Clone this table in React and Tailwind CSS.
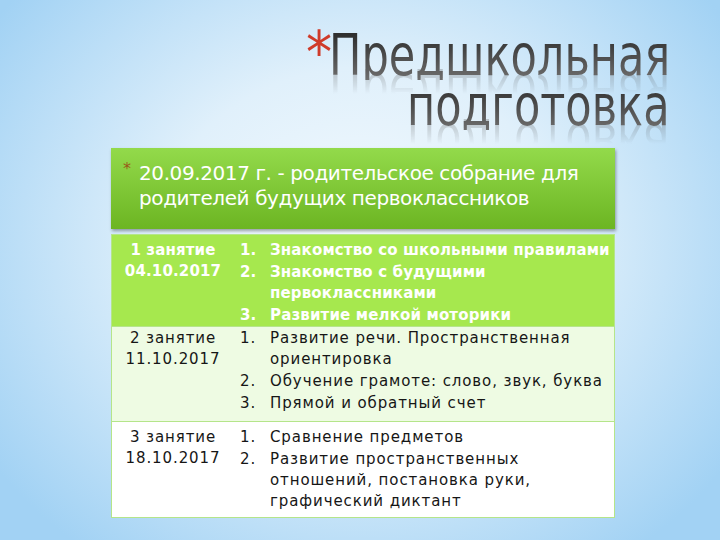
import React from 'react';

const rows = [
  {
    title: '1 занятие',
    date: '04.10.2017',
    items: [['Знакомство со школьными правилами'], ['Знакомство с будущими', 'первоклассниками'], ['Развитие мелкой моторики']],
    tone: 'bg-[#a6e84e] text-white font-bold tracking-[0.15px]',
    box: 'h-[91px] pt-[5px]',
  },
  {
    title: '2 занятие',
    date: '11.10.2017',
    items: [['Развитие речи. Пространственная', 'ориентировка'], ['Обучение грамоте: слово, звук, буква'], ['Прямой и обратный счет']],
    tone: 'bg-[#eefbe3] text-[#161616] tracking-[0.9px] border-t border-[#b5e58a]',
    box: 'h-[95px] pt-[1px]',
  },
  {
    title: '3 занятие',
    date: '18.10.2017',
    items: [['Сравнение предметов'], ['Развитие пространственных', 'отношений, постановка руки,', 'графический диктант']],
    tone: 'bg-white text-[#161616] tracking-[0.9px] border-t border-[#b5e58a]',
    box: 'h-[96px] pt-[5px]',
  },
];

const titleLine =
  "block shrink-0 whitespace-nowrap origin-right scale-x-[0.84] bg-[linear-gradient(#2f2f2f_10%,#6e6e6e)] bg-clip-text text-transparent [-webkit-box-reflect:below_-11px_linear-gradient(transparent_50%,rgba(0,0,0,0.35))]";

export default function App() {
  return (
    <div className="w-[720px] h-[540px] overflow-hidden bg-[radial-gradient(ellipse_62%_72%_at_50%_45%,#f4fafe_0%,#e0f0fb_45%,#a2d2f4_100%)] font-['DejaVu_Sans',sans-serif]">
      {/* Title */}
      <div className="flex justify-end pr-[50px] pt-[30px]">
        <div className="flex items-start">
          <span className="text-[#cf3b2a] text-[58px] leading-[58px] -mt-[6px] mr-[6px] font-['DejaVu_Sans_Condensed','DejaVu_Sans',sans-serif]">*</span>
          <div className="w-[332px] flex flex-col text-[57px] leading-[50px] font-['DejaVu_Sans_Condensed','DejaVu_Sans',sans-serif]">
            <div className="flex justify-end">
              <span className={titleLine}>Предшкольная</span>
            </div>
            <div className="flex justify-end">
              <span className={titleLine}>подготовка</span>
            </div>
          </div>
        </div>
      </div>

      <div className="ml-[111px] w-[504px] mt-[18px]">
        {/* Header */}
        <div className="h-[81px] bg-[linear-gradient(#93da4b,#6cb522)] shadow-[1px_2px_3px_rgba(0,0,0,0.35)] pl-[12px] pr-3 pt-[13px] text-white text-[20px] leading-[25px] tracking-[-0.4px]">
          <div className="flex">
            <span className="text-[#9a5a1a] text-[16px] leading-[16px] w-[16px] shrink-0">*</span>
            <span>20.09.2017 г. - родительское собрание для родителей будущих первоклассников</span>
          </div>
        </div>

        {/* Table */}
        <div className="mt-[5px] border border-[#b5e58a]">
          {rows.map((r, i) => (
            <div key={i} className={`flex text-[15px] leading-[21px] ${r.box} ${r.tone}`}>
              <div className="w-[122px] shrink-0 text-center">
                <div>{r.title}</div>
                <div>{r.date}</div>
              </div>
              <ol className="flex flex-col gap-[1px]">
                {r.items.map((it, j) => (
                  <li key={j} className="flex">
                    <span className="w-[36px] shrink-0 pl-[6px]">{j + 1}.</span>
                    <span className="whitespace-nowrap">
                      {it.map((t, k) => (
                        <span key={k} className="block">{t}</span>
                      ))}
                    </span>
                  </li>
                ))}
              </ol>
            </div>
          ))}
        </div>
      </div>
    </div>
  );
}
